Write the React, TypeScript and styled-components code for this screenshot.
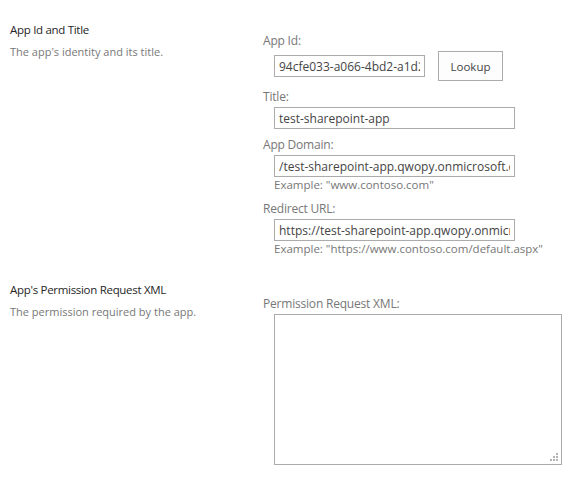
import * as React from 'react'
import styled, { createGlobalStyle } from 'styled-components'

const GlobalStyle = createGlobalStyle`
    html, body {
        margin: 0;
        padding: 0;
        background: #fff;
    }
    body {
        font-family: "Open Sans", "Noto Sans", Arial, sans-serif;
        color: #444;
    }
`

type FieldSpec = {
    label: string
    value: string
    width: number
    example?: string
    lookup?: boolean
}

const appFields: FieldSpec[] = [
    { label: 'App Id:', value: '94cfe033-a066-4bd2-a1d2-', width: 151, lookup: true },
    { label: 'Title:', value: 'test-sharepoint-app', width: 241 },
    {
        label: 'App Domain:',
        value: '/test-sharepoint-app.qwopy.onmicrosoft.com',
        width: 241,
        example: 'Example: "www.contoso.com"'
    },
    {
        label: 'Redirect URL:',
        value: 'https://test-sharepoint-app.qwopy.onmicrosoft.com',
        width: 241,
        example: 'Example: "https://www.contoso.com/default.aspx"'
    }
]

// dotted resize grip, like the old SharePoint textarea
const Grip = () => (
    <GripIcon width="8" height="8" viewBox="0 0 8 8">
        {[[6, 0], [3, 3], [6, 3], [0, 6], [3, 6], [6, 6]].map(([x, y]) => (
            <rect key={`${x}-${y}`} x={x} y={y} width="2" height="2" fill="#b4b4b4" />
        ))}
    </GripIcon>
)

export default function App() {
    return (
        <Page>
            <GlobalStyle />
            <Section>
                <Intro>
                    <SectionTitle>App Id and Title</SectionTitle>
                    <SectionDesc>The app's identity and its title.</SectionDesc>
                </Intro>
                <Fields>
                    {appFields.map(f => (
                        <Field key={f.label}>
                            <Label>{f.label}</Label>
                            {f.lookup ? (
                                <LookupRow>
                                    <TextInput $width={f.width} defaultValue={f.value} readOnly />
                                    <Button type="button">Lookup</Button>
                                </LookupRow>
                            ) : (
                                <TextInput $width={f.width} defaultValue={f.value} readOnly />
                            )}
                            {f.example && <Example>{f.example}</Example>}
                        </Field>
                    ))}
                </Fields>
            </Section>
            <Section $top={24}>
                <Intro>
                    <SectionTitle>App's Permission Request XML</SectionTitle>
                    <SectionDesc>The permission required by the app.</SectionDesc>
                </Intro>
                <Fields $pad={14}>
                    <Field>
                        <Label>Permission Request XML:</Label>
                        <AreaWrap>
                            <TextArea />
                            <Grip />
                        </AreaWrap>
                    </Field>
                </Fields>
            </Section>
        </Page>
    )
}

const Page = styled('div')`
    padding: 21px 0 0 10px;
`

const Section = styled('div')<{ $top?: number }>`
    display: grid;
    grid-template-columns: 253px 1fr;
    margin-top: ${p => p.$top || 0}px;
`

const Intro = styled('div')`
    display: flex;
    flex-direction: column;
`

const SectionTitle = styled('div')`
    font-size: 11.5px;
    letter-spacing: -0.3px;
    line-height: 18px;
    color: #262626;
`

const SectionDesc = styled('div')`
    margin-top: 5px;
    font-size: 11px;
    line-height: 16px;
    color: #777;
`

const Fields = styled('div')<{ $pad?: number }>`
    display: flex;
    flex-direction: column;
    gap: 7px;
    padding-top: ${p => p.$pad || 11}px;
`

const Field = styled('div')`
    display: flex;
    flex-direction: column;
    align-items: flex-start;
`

const Label = styled('div')`
    font-size: 12px;
    letter-spacing: -0.2px;
    line-height: 18px;
    color: #777;
`

const LookupRow = styled('div')`
    display: flex;
    align-items: center;
    gap: 13px;
    margin-top: 1px;
`

const TextInput = styled('input')<{ $width: number }>`
    box-sizing: border-box;
    width: ${p => p.$width}px;
    height: 22px;
    margin: 1px 0 0 11px;
    padding: 0 4px;
    border: 1px solid #ababab;
    background: #fff;
    font-family: "Open Sans", "Noto Sans", Arial, sans-serif;
    font-size: 12px;
    color: #444;
    outline: none;
    ${LookupRow} & {
        margin-top: 0;
    }
`

const Button = styled('button')`
    box-sizing: border-box;
    width: 65px;
    height: 30px;
    border: 1px solid #ababab;
    background: #fdfdfd;
    font-family: "Open Sans", "Noto Sans", Arial, sans-serif;
    font-size: 11.5px;
    color: #444;
    padding: 0;
`

const Example = styled('div')`
    margin-left: 11px;
    font-size: 11.5px;
    line-height: 16px;
    color: #777;
`

const AreaWrap = styled('div')`
    position: relative;
    margin: 1px 0 0 11px;
`

const TextArea = styled('textarea')`
    display: block;
    box-sizing: border-box;
    width: 288px;
    height: 151px;
    margin: 0;
    border: 1px solid #ababab;
    background: #fff;
    font-family: "Open Sans", "Noto Sans", Arial, sans-serif;
    font-size: 12px;
    color: #444;
    outline: none;
    resize: none;
`

const GripIcon = styled('svg')`
    position: absolute;
    right: 4px;
    bottom: 4px;
`
